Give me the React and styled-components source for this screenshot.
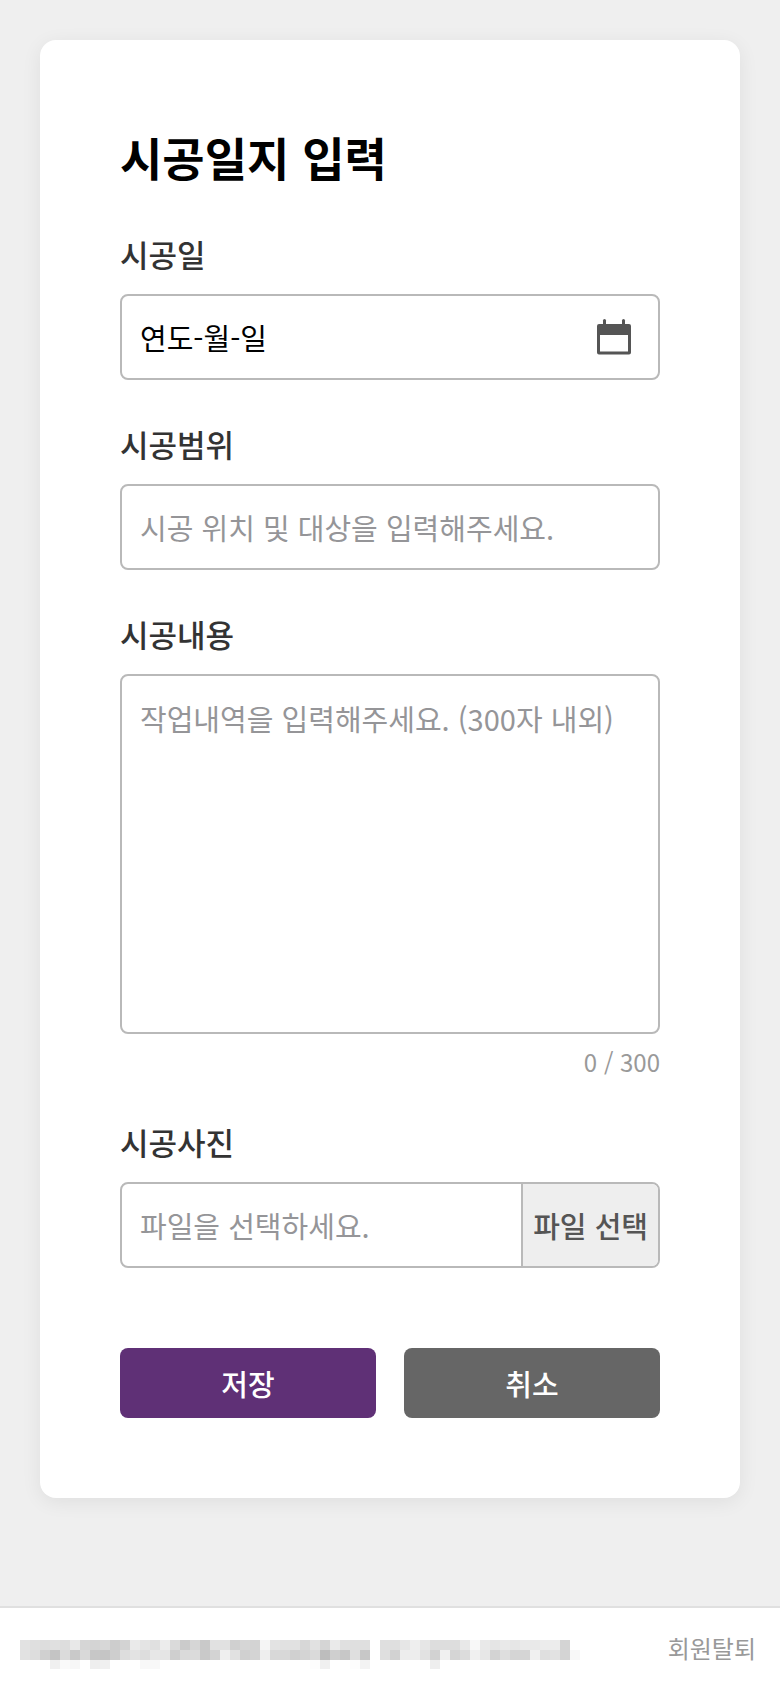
import React, { useRef, useState } from 'react';
import styled, { createGlobalStyle } from 'styled-components';

const MAX_LENGTH = 300;

// one entry per row of tiles, two hex digits (grey level) per tile
const COPYRIGHT_TILES = [
	'e2dfdde0dde8d6d4d7cdd3eae4e0ecdacbd6c9e1e1d0d6d3f5e3e1e1d7e1d5eae0dfdfffdfdfe6eee6dddddde8f8e9e5e9e6eae9ececd4ff',
	'e2ddd0c4dbc9d9c7c5cedde3dde7e5cfdadbc9d3efe1d0d4eed8d8d0d4dabdcfc7dfc7ffdfd2edede2d2f0d5dcf0e7d3ded5d5f0dfe2d4f8',
	'fffffff0faf7ffeef0fffffff8f8' + 'ff'.repeat(15) + 'fdf0fffffdf3' + 'ff'.repeat(6) + 'ee'
];

export default function App() {
	const datePicker = useRef(null)
	const [date, setDate] = useState('')
	const [area, setArea] = useState('')
	const [content, setContent] = useState('')
	const [fileName, setFileName] = useState('')

	const openPicker = () => {
		if(datePicker.current && datePicker.current.showPicker){
			datePicker.current.showPicker()
		}
	}
	const onFileChange = (e) => {
		const file = e.target.files[0]
		setFileName(file ? file.name : '')
	}

	return (
		<Page lang="ko">
			<GlobalStyle />
			<Main>
				<Card onSubmit={(e) => e.preventDefault()}>
					<Title>시공일지 입력</Title>

					<Field>
						<Label htmlFor="workDate">시공일</Label>
						<InputBox>
							<TextInput
								id="workDate"
								dark
								placeholder="연도-월-일"
								value={date}
								onChange={(e) => setDate(e.target.value)}
							/>
							<HiddenInput
								ref={datePicker}
								type="date"
								tabIndex={-1}
								aria-label="날짜"
								onChange={(e) => setDate(e.target.value)}
							/>
							<IconButton type="button" aria-label="날짜 선택" onClick={openPicker}>
								<CalendarIcon />
							</IconButton>
						</InputBox>
					</Field>

					<Field>
						<Label htmlFor="workArea">시공범위</Label>
						<InputBox>
							<TextInput
								id="workArea"
								placeholder="시공 위치 및 대상을 입력해주세요."
								value={area}
								onChange={(e) => setArea(e.target.value)}
							/>
						</InputBox>
					</Field>

					<Field>
						<Label htmlFor="workContent">시공내용</Label>
						<TextArea
							id="workContent"
							maxLength={MAX_LENGTH}
							placeholder="작업내역을 입력해주세요. (300자 내외)"
							value={content}
							onChange={(e) => setContent(e.target.value)}
						/>
						<Counter>{content.length} / {MAX_LENGTH}</Counter>
					</Field>

					<Field>
						<Label htmlFor="workPhoto">시공사진</Label>
						<InputBox>
							<TextInput readOnly aria-label="파일 이름" placeholder="파일을 선택하세요." value={fileName} />
							<HiddenInput id="workPhoto" type="file" accept="image/*" onChange={onFileChange} />
							<FileButton htmlFor="workPhoto">파일 선택</FileButton>
						</InputBox>
					</Field>

					<Buttons>
						<Button type="submit" color="#5f3076">저장</Button>
						<Button type="button" color="#666">취소</Button>
					</Buttons>
				</Card>
			</Main>
			<Footer>
				<Copyright />
				<FooterLink href="#">회원탈퇴</FooterLink>
			</Footer>
		</Page>
	)
}

const CalendarIcon = () => (
	<svg width="34" height="36" viewBox="0 0 34 36" fill="#555" aria-hidden="true">
		<rect x="6" y="0" width="3" height="8" rx="1.5" />
		<rect x="25" y="0" width="3" height="8" rx="1.5" />
		<path fillRule="evenodd" d="M2 5h30a2 2 0 0 1 2 2v26.600a2 2 0 0 1-2 2H2a2 2 0 0 1-2-2V7a2 2 0 0 1 2-2zM3 16v16.600h28V16z" />
	</svg>
)

const Copyright = () => (
	<Mosaic viewBox="0 0 560 29" shapeRendering="crispEdges" aria-hidden="true">
		{COPYRIGHT_TILES.map((row, y) => row.match(/../g).map((tone, x) => (
			<rect key={`${x}-${y}`} x={x * 10} y={y * 10} width="10" height="10" fill={`#${tone}${tone}${tone}`} />
		)))}
	</Mosaic>
)

const GlobalStyle = createGlobalStyle`
	*, *::before, *::after {
		box-sizing: border-box;
	}
	body {
		margin: 0;
		background: #efefef;
		font-family: 'Noto Sans CJK KR', sans-serif;
	}
	input, textarea, button {
		font-family: inherit;
	}
`;

const Page = styled.div`
	display: flex;
	flex-direction: column;
	min-height: 100vh;
`;

const Main = styled.main`
	flex: 1;
	padding: 40px 40px 108px;
`;

const Card = styled.form`
	padding: 80px;
	border-radius: 16px;
	background: #fff;
	box-shadow: 0 4px 20px rgba(0, 0, 0, 0.07);
`;

const Title = styled.h1`
	margin: 0 0 40px;
	font-size: 46px;
	font-weight: 700;
	line-height: 72px;
	color: #000;
`;

const Field = styled.div`
	display: flex;
	flex-direction: column;
	& + & {
		margin-top: 42px;
	}
`;

const Label = styled.label`
	margin-bottom: 18px;
	font-size: 31px;
	font-weight: 500;
	line-height: 44px;
	color: #333;
`;

const InputBox = styled.div`
	position: relative;
	display: flex;
	height: 86px;
	border: 2px solid #b9b9b9;
	border-radius: 8px;
	background: #fff;
	overflow: hidden;
`;

const TextInput = styled.input.withConfig({ shouldForwardProp: (prop) => prop !== 'dark' })`
	flex: 1;
	min-width: 0;
	padding: 0 18px;
	border: 0;
	outline: 0;
	background: transparent;
	font-size: 29px;
	color: #000;
	&::placeholder {
		color: ${p => p.dark ? '#000' : '#959598'};
		opacity: 1;
	}
`;

const HiddenInput = styled.input`
	position: absolute;
	right: 0;
	bottom: 0;
	width: 1px;
	height: 1px;
	opacity: 0;
	pointer-events: none;
`;

const IconButton = styled.button`
	display: flex;
	align-items: center;
	padding: 0 27px;
	border: 0;
	background: transparent;
	cursor: pointer;
`;

const TextArea = styled.textarea`
	display: block;
	width: 100%;
	height: 360px;
	padding: 20px 18px;
	border: 2px solid #b9b9b9;
	border-radius: 8px;
	outline: 0;
	resize: none;
	font-size: 29px;
	line-height: 44px;
	color: #000;
	&::placeholder {
		color: #959598;
		opacity: 1;
	}
`;

const Counter = styled.span`
	margin-top: 12px;
	font-size: 24px;
	line-height: 32px;
	text-align: right;
	color: #999;
`;

const FileButton = styled.label`
	display: flex;
	align-items: center;
	padding: 0 10px;
	border-left: 2px solid #b9b9b9;
	background: #eee;
	font-size: 29px;
	font-weight: 500;
	color: #555;
	white-space: nowrap;
	cursor: pointer;
`;

const Buttons = styled.div`
	display: flex;
	gap: 28px;
	margin-top: 80px;
`;

const Button = styled.button`
	flex: 1;
	height: 70px;
	padding: 0;
	border: 0;
	border-radius: 8px;
	background: ${p => p.color};
	font-size: 29px;
	font-weight: 500;
	color: #fff;
	cursor: pointer;
`;

const Footer = styled.footer`
	display: flex;
	align-items: center;
	justify-content: space-between;
	gap: 24px;
	min-height: 82px;
	padding: 0 24px 0 20px;
	border-top: 2px solid #e0e0e0;
	background: #fff;
`;

const Mosaic = styled.svg`
	flex: 0 1 560px;
	min-width: 0;
	margin-top: 12px;
`;

const FooterLink = styled.a`
	font-size: 24px;
	line-height: 36px;
	color: #999;
	text-decoration: none;
	white-space: nowrap;
`;
